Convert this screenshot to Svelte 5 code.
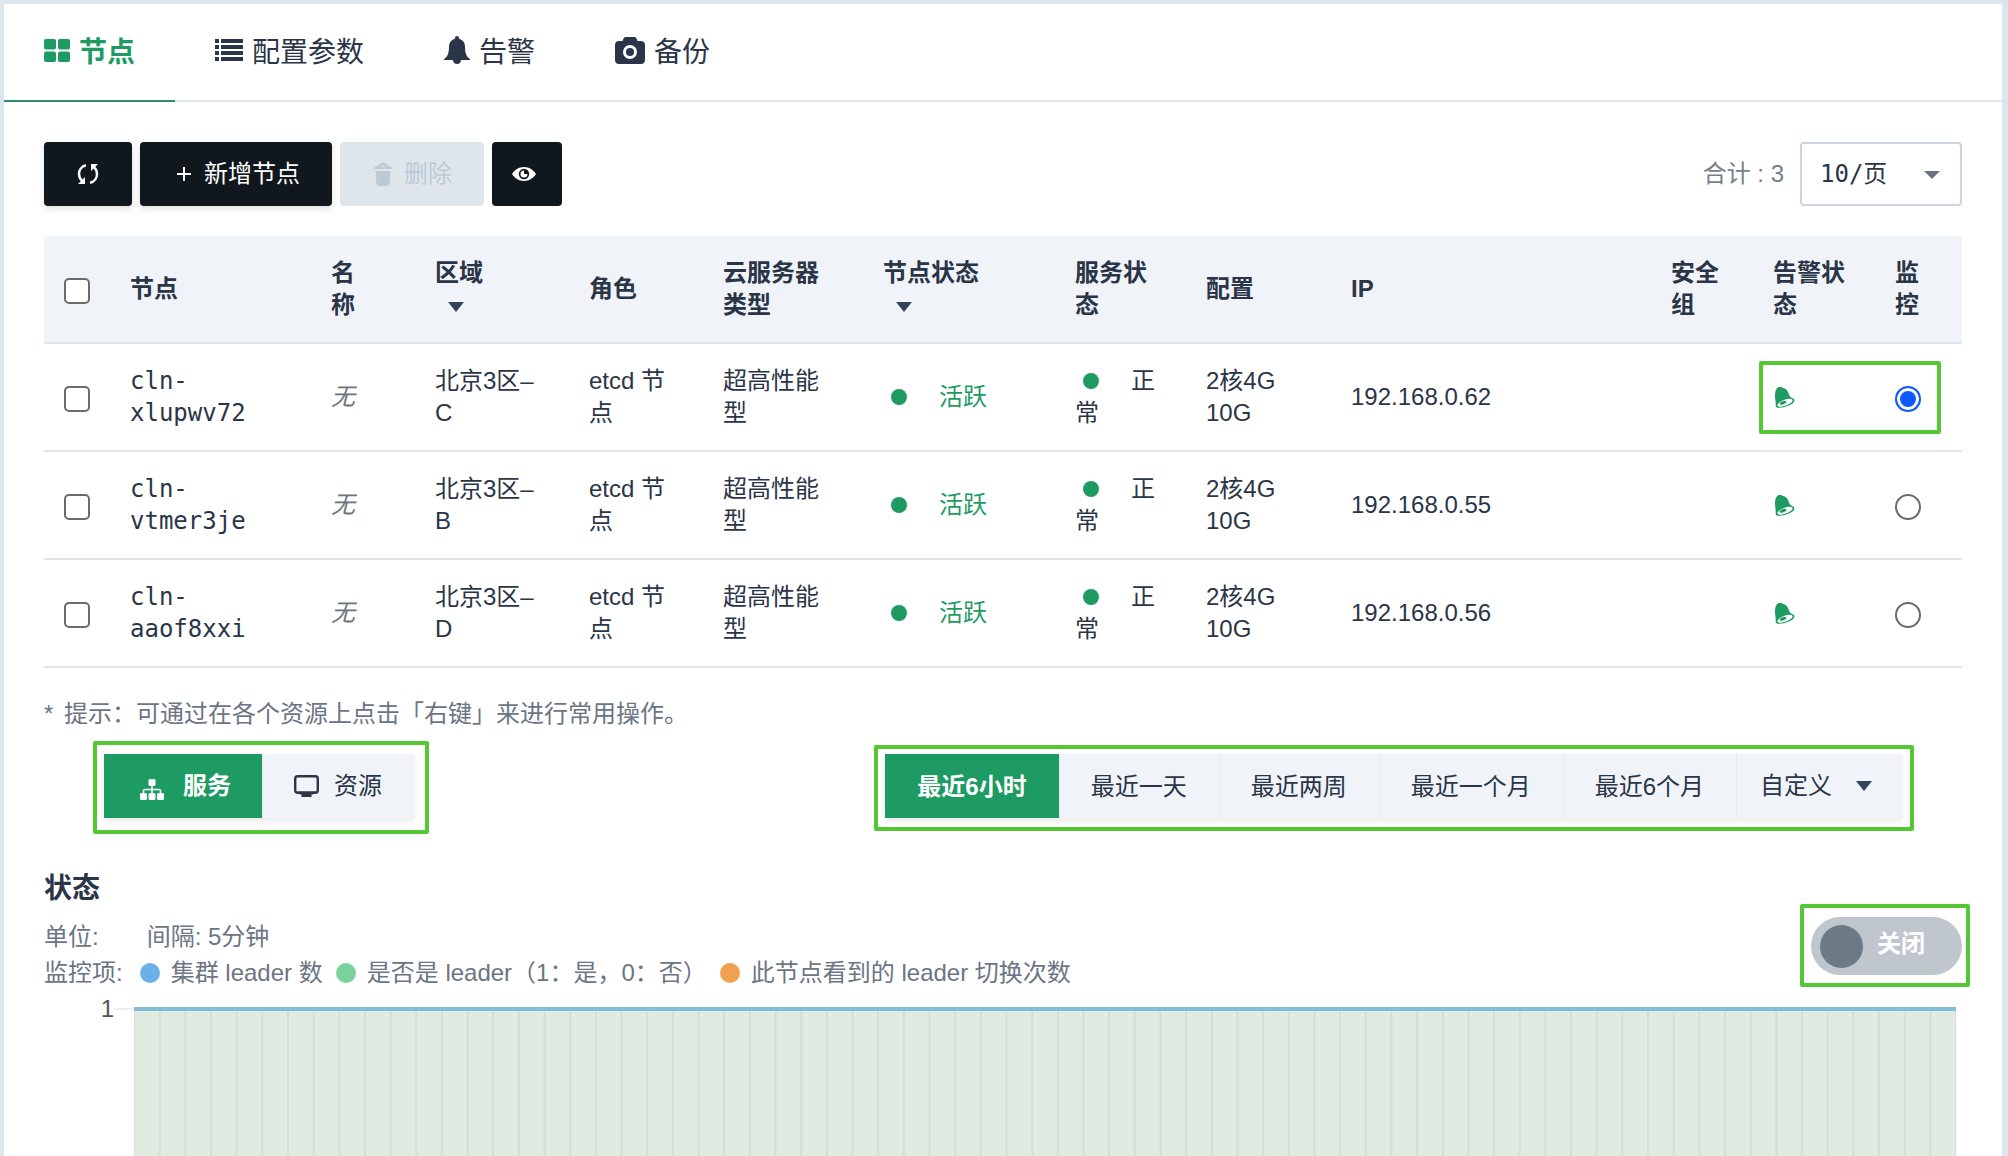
<script>
  const tabs = [
    { id: "nodes", label: "节点" },
    { id: "config", label: "配置参数" },
    { id: "alarm", label: "告警" },
    { id: "backup", label: "备份" },
  ];

  const columns = [
    { lines: ["节点"], width: 201 },
    { lines: ["名", "称"], width: 104 },
    { lines: ["区域"], width: 154, sortable: true },
    { lines: ["角色"], width: 134 },
    { lines: ["云服务器", "类型"], width: 160 },
    { lines: ["节点状态"], width: 192, sortable: true },
    { lines: ["服务状", "态"], width: 131 },
    { lines: ["配置"], width: 145 },
    { lines: ["IP"], width: 320 },
    { lines: ["安全", "组"], width: 102 },
    { lines: ["告警状", "态"], width: 122 },
    { lines: ["监", "控"], width: 87 },
  ];

  const nodes = [
    { id: "cln-xlupwv72", zone: "北京3区–C", ip: "192.168.0.62" },
    { id: "cln-vtmer3je", zone: "北京3区–B", ip: "192.168.0.55" },
    { id: "cln-aaof8xxi", zone: "北京3区–D", ip: "192.168.0.56" },
  ];

  const ranges = ["最近6小时", "最近一天", "最近两周", "最近一个月", "最近6个月"];

  const legend = [
    { label: "集群 leader 数", color: "blue" },
    { label: "是否是 leader（1：是，0：否）", color: "green" },
    { label: "此节点看到的 leader 切换次数", color: "orange" },
  ];

  // 5 minute samples over 6 hours
  const steps = 71;

  let activeTab = $state("nodes");
  let selected = $state([]);
  let monitored = $state("cln-xlupwv72");
  let view = $state("service");
  let range = $state("最近6小时");
  let realtime = $state(false);

  const toggleAll = (e) => {
    selected = e.target.checked ? nodes.map((n) => n.id) : [];
  };
</script>

<main>
  <nav class="tabs">
    {#each tabs as tab}
      <button
        class="tab"
        class:active={activeTab === tab.id}
        onclick={() => (activeTab = tab.id)}
      >
        {#if tab.id === "nodes"}
          <svg width="26" height="23" viewBox="0 0 26 23" fill="currentColor">
            <rect width="12" height="10.500" rx="2" />
            <rect x="14" width="12" height="10.500" rx="2" />
            <rect y="12.500" width="12" height="10.500" rx="2" />
            <rect x="14" y="12.500" width="12" height="10.500" rx="2" />
          </svg>
        {:else if tab.id === "config"}
          <svg width="28" height="23" viewBox="0 0 28 23" fill="currentColor">
            {#each [0, 6, 12, 18] as y}
              <rect {y} width="4" height="4" />
              <rect x="6" {y} width="22" height="4" />
            {/each}
          </svg>
        {:else if tab.id === "alarm"}
          <svg width="26" height="28" viewBox="0 0 26 28" fill="currentColor">
            <path
              d="M13 0c1.200 0 2 .9 2 2v.8c4 1 6 4.200 6 8.200 0 7 2 10 5 12v1H0v-1c3-2 5-5 5-12 0-4 2-7.200 6-8.200V2c0-1.100.8-2 2-2z"
            />
            <path d="M9 24h8c0 2.400-1.600 4-4 4s-4-1.600-4-4z" />
          </svg>
        {:else}
          <svg width="30" height="27" viewBox="0 0 30 27" fill="currentColor">
            <path
              fill-rule="evenodd"
              d="M11 0h8c1.500 0 2 .6 2.600 1.800L22.500 4H26c2.400 0 4 1.600 4 4v15c0 2.400-1.600 4-4 4H4c-2.400 0-4-1.600-4-4V8c0-2.400 1.600-4 4-4h3.500l.9-2.200C9 .6 9.500 0 11 0zm4 8a7 7 0 1 0 0 14 7 7 0 0 0 0-14z"
            />
            <circle cx="15" cy="15" r="4" />
          </svg>
        {/if}
        {tab.label}
      </button>
    {/each}
  </nav>

  <div class="content">
    <div class="toolbar">
      <button class="btn refresh" aria-label="刷新">
        <svg width="22" height="20" viewBox="0 0 22 20" fill="none" stroke="currentColor" stroke-width="2.400">
          <path d="M9 1.200C4.500 2 2 6 2 9.800c0 3 1.200 5.500 3.200 7.200" />
          <path d="M13 18.800c4.500-.8 7-4.800 7-8.600 0-3-1.200-5.500-3.200-7.200" />
          <path d="M8 13v7H1zM14 7V0h7z" fill="currentColor" stroke="none" />
        </svg>
      </button>
      <button class="btn add">
        <svg width="14" height="14" viewBox="0 0 14 14" stroke="currentColor" stroke-width="2">
          <path d="M7 0v14M0 7h14" />
        </svg>
        新增节点
      </button>
      <button class="btn remove" disabled>
        <svg width="18" height="24" viewBox="0 0 18 24" fill="currentColor">
          <path
            fill-rule="evenodd"
            d="M0 7c0-1.500 1.500-2.500 4-3.500C5.500 1.500 7.500.5 9 .5s3.500 1 5 3c2.500 1 4 2 4 3.500zM6.500 5h5L9 3z"
          />
          <path d="M1.500 9h15l-.8 12c-.2 2-1.300 3-3 3H5.300c-1.700 0-2.800-1-3-3z" />
        </svg>
        删除
      </button>
      <button class="btn show" aria-label="显示列">
        <svg width="24" height="14" viewBox="0 0 24 14" fill="currentColor">
          <path
            fill-rule="evenodd"
            d="M12 0c5 0 9.500 2.800 12 7-2.500 4.200-7 7-12 7S2.500 11.200 0 7c2.500-4.200 7-7 12-7zm0 1.800a5.200 5.200 0 1 0 0 10.400 5.200 5.200 0 0 0 0-10.400z"
          />
          <path d="M12 3.500A3.500 3.500 0 1 0 15.500 7H12z" />
        </svg>
      </button>
      <div class="paging">
        <label for="pageSize">合计 : 3</label>
        <div class="select">
          <select id="pageSize">
            <option>10/页</option>
            <option>20/页</option>
            <option>50/页</option>
          </select>
        </div>
      </div>
    </div>

    <table>
      <colgroup>
        <col style="width: 66px" />
        {#each columns as col}
          <col style="width: {col.width}px" />
        {/each}
      </colgroup>
      <thead>
        <tr>
          <th>
            <input
              type="checkbox"
              aria-label="全选"
              checked={selected.length === nodes.length}
              onchange={toggleAll}
            />
          </th>
          {#each columns as col}
            <th>
              {#each col.lines as line}
                <div>{line}</div>
              {/each}
              {#if col.sortable}
                <div class="sort"><span class="caret"></span></div>
              {/if}
            </th>
          {/each}
        </tr>
      </thead>
      <tbody>
        {#each nodes as node, i}
          <tr>
            <td>
              <input
                type="checkbox"
                aria-label={node.id}
                value={node.id}
                bind:group={selected}
              />
            </td>
            <td class="mono">{node.id}</td>
            <td class="none"><em>无</em></td>
            <td>{node.zone}</td>
            <td>etcd 节点</td>
            <td>超高性能型</td>
            <td class="ok"><span class="dot"></span>活跃</td>
            <td><span class="dot"></span>正常</td>
            <td>2核4G 10G</td>
            <td>{node.ip}</td>
            <td></td>
            <td class="alert">
              <svg width="22" height="22" viewBox="0 0 22 22">
                <path
                  d="M3.500 3C4.500 1.500 6 .5 7.500.8c.8 0 1.300.4 1.800.9 3.500.6 5.500 2.800 6.500 6.300.5 1.800 1.500 3.200 4 4.300 1.500.7 2 2 1.200 3.500C19 19 13 21.500 6 21.800c-2.500 0-3.500-.8-3.300-2.500C3 16 2 13 2 9.500 2 7 2.300 4.800 3.500 3z"
                  fill="#1d9b62"
                />
                <ellipse cx="12" cy="16.800" rx="8" ry="3" transform="rotate(-20 12 16.800)" fill="#fff" />
                <ellipse cx="10" cy="16.800" rx="3.600" ry="1.600" transform="rotate(-20 10 16.800)" fill="#1d9b62" />
              </svg>
              {#if i === 0}
                <div class="mark over"></div>
              {/if}
            </td>
            <td>
              <input
                type="radio"
                name="monitored"
                aria-label="监控 {node.id}"
                value={node.id}
                bind:group={monitored}
              />
            </td>
          </tr>
        {/each}
      </tbody>
    </table>

    <p class="hint"><span>*</span> 提示：可通过在各个资源上点击「右键」来进行常用操作。</p>

    <div class="filters">
      <div class="mark views">
        <div class="group">
          <button
            class="seg service"
            class:on={view === "service"}
            onclick={() => (view = "service")}
          >
            <svg width="24" height="21" viewBox="0 0 24 21" fill="currentColor">
              <rect x="8.500" width="7" height="7" rx="1.500" />
              <rect y="14" width="7" height="7" rx="1.500" />
              <rect x="8.500" y="14" width="7" height="7" rx="1.500" />
              <rect x="17" y="14" width="7" height="7" rx="1.500" />
              <path
                d="M12 6v9M3.500 15v-3c0-1 .5-1.500 1.500-1.500h14c1 0 1.500.5 1.500 1.500v3"
                fill="none"
                stroke="currentColor"
                stroke-width="1.500"
              />
            </svg>
            服务
          </button>
          <button
            class="seg resource"
            class:on={view === "resource"}
            onclick={() => (view = "resource")}
          >
            <svg width="25" height="22" viewBox="0 0 25 22">
              <rect x="1.200" y="1.200" width="22.600" height="16.600" rx="2.500" fill="none" stroke="currentColor" stroke-width="2.400" />
              <path d="M3 16.500h19l-3 3h-1.500V22h-10v-2.500H6z" fill="currentColor" />
            </svg>
            资源
          </button>
        </div>
      </div>
      <div class="mark ranges">
        <div class="group">
          {#each ranges as r}
            <button class="seg" class:on={range === r} onclick={() => (range = r)}>{r}</button>
          {/each}
          <button class="seg custom">自定义<span class="caret"></span></button>
        </div>
      </div>
    </div>

    <section>
      <div class="head">
        <div>
          <h2>状态</h2>
          <p class="meta"><span class="unit">单位:</span>间隔: 5分钟</p>
          <p class="meta legend">
            <span class="title">监控项:</span>
            {#each legend as item}
              <span class="item"><i class={item.color}></i>{item.label}</span>
            {/each}
          </p>
        </div>
        <div class="mark switch-box">
          <label class="switch">
            <input type="checkbox" role="switch" bind:checked={realtime} />
            <span class="knob"></span>
            <span class="state">{realtime ? "开启" : "关闭"}</span>
          </label>
        </div>
      </div>

      <div class="chart">
        <span class="axis">1</span>
        <span class="tick"></span>
        <svg class="plot">
          <rect width="100%" height="100%" fill="#e1ebe1" />
          {#each { length: steps + 1 } as _, i}
            <line
              x1="{(i / steps) * 100}%"
              x2="{(i / steps) * 100}%"
              y1="0"
              y2="100%"
              stroke="#d5dfd5"
              stroke-width="2"
            />
          {/each}
          <rect width="100%" height="4" fill="#84bdd8" />
        </svg>
      </div>
    </section>
  </div>
</main>

<style>
  :global(body) {
    background: #dce6ef;
  }

  * {
    box-sizing: border-box;
    margin: 0;
  }

  main {
    display: flex;
    flex-direction: column;
    min-height: 100vh;
    margin-left: 4px;
    margin-right: 6px;
    border-top: 4px solid #dce6ef;
    background: #fff;
    color: #2a3547;
    font-family: "Liberation Sans", "Noto Sans CJK SC", sans-serif;
    font-size: 24px;
    line-height: 32px;
  }

  button,
  select {
    font: inherit;
    color: inherit;
    border: 0;
    background: none;
    cursor: pointer;
  }

  svg {
    flex: none;
  }

  .tabs {
    display: flex;
    box-shadow: inset 0 -2px #dfe5ed;
  }

  .tab {
    display: flex;
    align-items: center;
    gap: 9px;
    height: 98px;
    padding: 0 40px;
    font-size: 28px;
  }

  .tab svg {
    margin-bottom: 6px;
  }

  .tab.active {
    color: #1d9b62;
    font-weight: 700;
    box-shadow: inset 0 -2px #2b9069;
  }

  .content {
    flex: 1;
    display: flex;
    flex-direction: column;
    padding: 40px 40px 0;
  }

  .toolbar {
    display: flex;
    gap: 8px;
    margin-bottom: 30px;
  }

  .btn {
    display: flex;
    align-items: center;
    justify-content: center;
    gap: 12px;
    height: 64px;
    border-radius: 4px;
    background: #10181d;
    color: #fff;
    box-shadow: 0 3px 6px #10181d22;
  }

  .refresh {
    padding: 0 33px;
  }

  .add {
    gap: 13px;
    padding: 0 32px 0 37px;
  }

  .remove {
    padding: 0 32px 0 34px;
    background: #dee6ec;
    color: #bdcad6;
    box-shadow: none;
  }

  .show {
    padding: 0 26px 0 20px;
    box-shadow: none;
  }

  .paging {
    display: flex;
    align-items: center;
    gap: 16px;
    margin-left: auto;
    color: #768089;
  }

  .select {
    position: relative;
    color: #2a3547;
  }

  .select::after {
    content: "";
    position: absolute;
    right: 22px;
    top: 29px;
    border: 8px solid transparent;
    border-top-color: #68737f;
    border-bottom: 0;
    pointer-events: none;
  }

  select {
    appearance: none;
    width: 162px;
    height: 64px;
    padding: 0 18px;
    border: 2px solid #cbd3e5;
    border-radius: 4px;
    font-family: "DejaVu Sans Mono", "Noto Sans CJK SC", monospace;
  }

  table {
    width: 100%;
    table-layout: fixed;
    border-collapse: separate;
    border-spacing: 0;
  }

  th,
  td {
    height: 108px;
    padding: 0 22px 0 20px;
    border-bottom: 2px solid #e0e5e8;
    text-align: left;
    vertical-align: middle;
  }

  th {
    background: #f0f4f8;
    font-weight: 700;
  }

  th:last-child,
  td:last-child {
    padding-right: 16px;
  }

  .mono {
    font-family: "DejaVu Sans Mono", monospace;
  }

  .none {
    color: #6c757d;
  }

  .ok {
    color: #1d9b62;
  }

  .dot {
    display: inline-block;
    width: 16px;
    height: 16px;
    margin: 0 32px 0 8px;
    border-radius: 50%;
    background: #1d9b62;
  }

  .caret {
    display: inline-block;
    border: 8px solid transparent;
    border-top: 10px solid #35435a;
    border-bottom: 0;
  }

  .sort {
    padding-left: 13px;
  }

  .sort .caret {
    vertical-align: middle;
  }

  th input,
  td input {
    appearance: none;
    display: block;
    width: 26px;
    height: 26px;
    margin-top: 4px;
    border: 2px solid #6b6b6b;
    border-radius: 5px;
    background: #fff;
  }

  input[type="checkbox"]:checked {
    background: #1d9b62;
  }

  input[type="radio"] {
    border-radius: 50%;
  }

  input[type="radio"]:checked {
    border-color: #0d5bff;
    background: #0d5bff;
    box-shadow: inset 0 0 0 3px #fff;
  }

  .alert {
    position: relative;
  }

  .alert svg {
    display: block;
  }

  .mark {
    border: 4px solid #54c834;
    border-radius: 2px;
  }

  .over {
    position: absolute;
    left: 6px;
    top: 17px;
    width: 182px;
    height: 73px;
    z-index: 1;
    pointer-events: none;
  }

  .hint {
    margin: 30px 0 11px;
    color: #6b7583;
  }

  .hint span {
    margin-right: 4px;
  }

  .filters {
    display: flex;
    justify-content: space-between;
    align-items: flex-start;
    padding: 0 48px 0 49px;
  }

  .views {
    padding: 9px 11px 12px 7px;
  }

  .ranges {
    margin-top: 4px;
    padding: 5px 8px 9px 7px;
  }

  .group {
    display: flex;
    box-shadow: 0 3px 6px #2a35471c;
  }

  .seg {
    display: flex;
    align-items: center;
    height: 64px;
    padding: 1px 32px 0;
    background: #f0f4f8;
    white-space: nowrap;
  }

  .seg + .seg {
    box-shadow: inset 1px 0 #e6ebf0;
  }

  .seg.on {
    background: #1d9b62;
    color: #fff;
    font-weight: 700;
    box-shadow: none;
  }

  .service {
    gap: 19px;
    padding: 0 31px 0 36px;
  }

  .service svg {
    margin-top: 6px;
  }

  .resource {
    gap: 15px;
    padding: 0 32px;
  }

  .custom {
    gap: 24px;
    padding: 0 30px 0 24px;
  }

  section {
    flex: 1;
    display: flex;
    flex-direction: column;
    margin-top: 37px;
  }

  .head {
    display: flex;
    justify-content: space-between;
    align-items: flex-start;
    line-height: 36px;
  }

  h2 {
    margin-bottom: 12px;
    font-size: 28px;
    font-weight: 700;
  }

  .meta {
    color: #6b7583;
  }

  .unit {
    margin-right: 48px;
  }

  .legend {
    display: flex;
    gap: 13px;
  }

  .title {
    margin-right: 4px;
  }

  .item {
    display: flex;
    align-items: center;
    gap: 11px;
  }

  .item i {
    width: 20px;
    height: 20px;
    border-radius: 50%;
  }

  .blue {
    background: #6bb0e8;
  }

  .green {
    background: #79d29b;
  }

  .orange {
    background: #f0a150;
  }

  .switch-box {
    margin: 33px -8px 0 0;
    padding: 9px 4px 8px 7px;
  }

  .switch {
    display: flex;
    align-items: center;
    gap: 14px;
    width: 151px;
    height: 58px;
    padding: 0 9px;
    border-radius: 29px;
    background: #bfc6ce;
    color: #fff;
    font-weight: 700;
    cursor: pointer;
  }

  .switch input {
    position: absolute;
    opacity: 0;
  }

  .knob {
    width: 43px;
    height: 43px;
    border-radius: 50%;
    background: #6c7a86;
  }

  .state {
    padding-bottom: 4px;
  }

  .chart {
    flex: 1;
    display: flex;
    align-items: flex-start;
    min-height: 148px;
    padding-right: 6px;
  }

  .axis {
    width: 70px;
    text-align: right;
    line-height: 36px;
    color: #555;
  }

  .tick {
    width: 20px;
    height: 2px;
    margin-top: 17px;
    background: #eee;
  }

  .plot {
    flex: 1;
    align-self: stretch;
    min-width: 0;
    height: auto;
    margin-top: 16px;
  }
</style>
